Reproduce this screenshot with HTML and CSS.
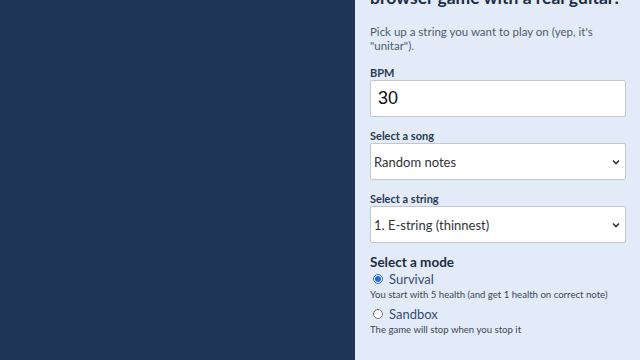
FILE: index.html
```html
<!DOCTYPE html>
<html lang="en">
<head>
    <meta charset="UTF-8">
    <meta name="viewport" content="width=device-width, initial-scale=1.0">
    <title>Unitar</title>
    <link rel="stylesheet" href="styles.css">
</head>
<body>
    <div class="escenario"></div>

    <div class="panel">
        <h2>browser game with a real guitar!</h2>
        <p class="intro">Pick up a string you want to play on (yep, it's "unitar").</p>

        <label class="campo-label" for="bpm">BPM</label>
        <input class="campo" id="bpm" type="text" value="30">

        <label class="campo-label" for="cancion">Select a song</label>
        <select class="campo select" id="cancion">
            <option>Random notes</option>
        </select>

        <label class="campo-label" for="cuerda">Select a string</label>
        <select class="campo select" id="cuerda">
            <option>1. E-string (thinnest)</option>
        </select>

        <h4 class="modo-titulo">Select a mode</h4>
        <label class="modo">
            <input type="radio" name="modo" checked> Survival
        </label>
        <p class="modo-desc">You start with 5 health (and get 1 health on correct note)</p>
        <label class="modo">
            <input type="radio" name="modo"> Sandbox
        </label>
        <p class="modo-desc">The game will stop when you stop it</p>
    </div>
</body>
</html>
```

FILE: styles.css
```css
html, body {
    margin: 0;
    height: 100%;
    overflow: hidden;
}

body {
    display: flex;
    font-family: 'Lato', sans-serif;
    color: #1c2c44;
}

.escenario {
    flex: 0 0 355px;
    background-color: #1e3557;
}

.panel {
    flex: 0 0 285px;
    box-sizing: border-box;
    min-width: 0;
    background-color: #e3ebf8;
    padding: 0 14px 0 15px;
    display: flex;
    flex-direction: column;
}

h2 {
    font-size: 17.5px;
    line-height: 22px;
    margin: -13px 0 0 0;
    color: #1c2c44;
    white-space: nowrap;
}

.intro {
    font-size: 11.5px;
    line-height: 14px;
    color: #4c5b70;
    margin: 16px 0 13px 0;
}

.campo-label {
    font-size: 11px;
    font-weight: bold;
    color: #2a3a52;
    line-height: 13px;
    margin-bottom: 1px;
}

.campo {
    box-sizing: border-box;
    width: 100%;
    height: 37px;
    border: 1px solid #c4c7cc;
    border-radius: 2px;
    background-color: white;
    margin: 0 0 12px 0;
}

input.campo {
    font-family: 'Liberation Sans', Arial, sans-serif;
    font-size: 18px;
    padding: 0 7px;
    color: #111;
}

.select {
    -webkit-appearance: none;
    appearance: none;
    font-family: 'Lato', sans-serif;
    font-size: 13px;
    color: #333;
    padding: 0 20px 0 3px;
    background-image: url("data:image/svg+xml,%3Csvg xmlns='http://www.w3.org/2000/svg' width='8' height='6' viewBox='0 0 8 6'%3E%3Cpath d='M1 1.5 L4 4.5 L7 1.5' fill='none' stroke='%23333' stroke-width='1.6'/%3E%3C/svg%3E");
    background-repeat: no-repeat;
    background-position: right 5px center;
}

.modo-titulo {
    font-size: 13.5px;
    margin: -1px 0 0 0;
    line-height: 17px;
    color: #1c2c44;
}

.modo {
    display: flex;
    align-items: center;
    font-size: 13px;
    color: #3a4d6e;
    line-height: 16px;
    margin-left: 3px;
}

.modo input {
    width: 10px;
    height: 10px;
    margin: 0 6px 0 0;
    accent-color: #1f6fd6;
}

.modo-desc {
    font-size: 9.6px;
    color: #3a475a;
    margin: 1px 0 5px 0;
    line-height: 13px;
}
```
